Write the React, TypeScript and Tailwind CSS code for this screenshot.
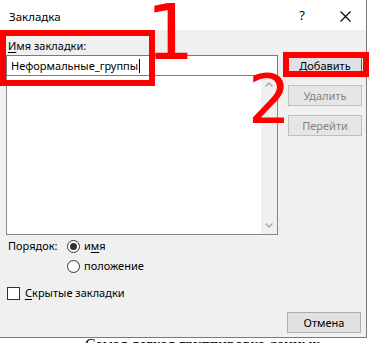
import React from 'react'

function Btn({ label, ul, disabled, primary }: { label: string; ul?: boolean; disabled?: boolean; primary?: boolean }) {
  return (
    <button
      className={
        'h-[21px] w-[74px] text-[11px] leading-none flex items-center justify-center bg-[#e1e1e1] border ' +
        (primary ? 'border-[#0078d7] text-black' : disabled ? 'border-[#bfbfbf] bg-[#e6e6e6] text-[#838383]' : 'border-[#adadad] text-black')
      }
    >
      {ul ? (
        <span>
          <span className="underline underline-offset-2">{label[0]}</span>
          {label.slice(1)}
        </span>
      ) : (
        label
      )}
    </button>
  )
}

function Radio({ checked }: { checked?: boolean }) {
  return (
    <span className="w-[13px] h-[13px] rounded-full border border-[#333333] bg-white flex items-center justify-center">
      {checked && <span className="w-[7px] h-[7px] rounded-full bg-[#333333]" />}
    </span>
  )
}

export default function App() {
  return (
    <div className="w-[371px] h-[343px] overflow-hidden bg-white relative font-['Segoe_UI','Noto_Sans',sans-serif] text-[11px] text-black">
      <div className="w-[367px] h-[338px] flex flex-col border-r border-b border-[#7a7a7a]">
        {/* Title bar */}
        <div className="h-[30px] bg-white flex items-center pl-[9px] shrink-0">
          <span className="text-[11.5px] mt-[3px]">Закладка</span>
          <span className="ml-auto mr-[35px] text-[13px] mt-[2px]">?</span>
          <svg width="11" height="11" viewBox="0 0 11 11" className="mr-[15px] mt-[2px]">
            <path d="M0.5 0.5 L10.5 10.5 M10.5 0.5 L0.5 10.5" stroke="#000" strokeWidth="1.1" />
          </svg>
        </div>

        {/* Body */}
        <div className="flex-1 bg-[#f0f0f0] flex flex-col">
          <div className="flex">
            <div className="ml-[6px] w-[272px] flex flex-col">
              <div className="mt-[8px] h-[16px] pl-[2px] leading-[16px]">
                <span className="underline underline-offset-2">И</span>мя закладки:
              </div>
              <div className="mt-[1px] h-[21px] border border-[#7a7a7a] bg-white flex items-center pl-[4px] leading-none">
                Неформальные_группы
                <span className="w-px h-[14px] bg-black ml-[1px]" />
              </div>
              <div className="h-[159px] border border-t-0 border-[#828790] bg-white flex">
                <div className="flex-1" />
                <div className="w-[16px] bg-[#f0f0f0] flex flex-col items-center justify-between py-[6px]">
                  <svg width="8" height="5" viewBox="0 0 8 5">
                    <path d="M0.5 4.5 L4 1 L7.5 4.5" stroke="#a3a3a3" strokeWidth="1.3" fill="none" />
                  </svg>
                  <svg width="8" height="5" viewBox="0 0 8 5">
                    <path d="M0.5 0.5 L4 4 L7.5 0.5" stroke="#a3a3a3" strokeWidth="1.3" fill="none" />
                  </svg>
                </div>
              </div>
            </div>
            <div className="ml-[10px] mt-[25px] flex flex-col gap-[9px]">
              <Btn label="Добавить" ul primary />
              <Btn label="Удалить" disabled />
              <Btn label="Перейти" disabled />
            </div>
          </div>

          {/* Order */}
          <div className="mt-[3px] h-[16px] flex items-center pl-[8px]">
            <span className="w-[59px]">Порядок:</span>
            <Radio checked />
            <span className="ml-[4px]">
              и<span className="underline underline-offset-2">м</span>я
            </span>
          </div>
          <div className="mt-[4px] h-[16px] flex items-center pl-[67px]">
            <Radio />
            <span className="ml-[4px]">положение</span>
          </div>

          <div className="mt-[11px] h-[16px] flex items-center pl-[7px]">
            <span className="w-[13px] h-[13px] border border-[#333333] bg-white" />
            <span className="ml-[5px]">
              <span className="underline underline-offset-2">С</span>крытые закладки
            </span>
          </div>

          <div className="mt-[11px] flex justify-end pr-[5px]">
            <Btn label="Отмена" />
          </div>
        </div>
      </div>

      {/* document text behind dialog */}
      <div className="pl-[85px] -mt-[3px] text-[16px] leading-[20px] whitespace-nowrap font-['Liberation_Serif',serif]">
        Самая легкая группировка данных
      </div>

      {/* annotations */}
      <div className="absolute left-0 top-[30px] w-[155px] h-[56px] border-[6px] border-[#ff0000]" />
      <div className="absolute left-[283px] top-[52px] w-[86px] h-[25px] border-[6px] border-[#ff0000]" />
      <div className="absolute left-[146px] top-[-5px] text-[#ff0000] text-[76px] leading-none font-['DejaVu_Sans',sans-serif]">1</div>
      <div className="absolute left-[248px] top-[67px] text-[#ff0000] text-[67px] leading-none font-['DejaVu_Sans',sans-serif]">2</div>
    </div>
  )
}
